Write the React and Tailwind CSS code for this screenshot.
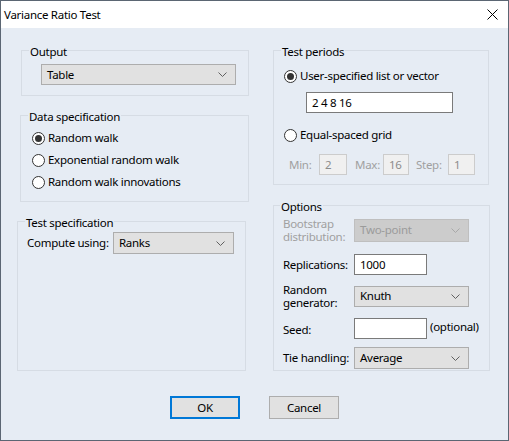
const Chevron = ({ color = "#606060" }) => (
  <svg width="9" height="5" viewBox="0 0 9 5" className="shrink-0">
    <polyline points="0.5,0.5 4.5,4.5 8.5,0.5" fill="none" stroke={color} strokeWidth="1" />
  </svg>
);

const Select = ({ value, w, h = "h-[21px]", disabled }) => (
  <div
    className={`${w} ${h} flex items-center justify-between pl-[5px] pr-[8px] border ${
      disabled ? "bg-[#cccccc] border-[#bfbfbf] text-[#9b9b9b]" : "bg-[#e1e1e1] border-[#adadad]"
    }`}
  >
    <span>{value}</span>
    <Chevron color={disabled ? "#a8a8a8" : "#606060"} />
  </div>
);

const TextBox = ({ value, w, disabled }) => (
  <div
    className={`${w} h-[21px] flex items-center pl-[5px] border ${
      disabled ? "bg-[#f0f0f0] border-[#cccccc] text-[#8c8c8c]" : "bg-white border-[#7a7a7a]"
    }`}
  >
    {value}
  </div>
);

const Radio = ({ checked, label }) => (
  <div className="flex items-center h-full gap-[3px] whitespace-nowrap">
    <span className="w-[13px] h-[13px] rounded-full border border-[#333333] bg-white flex items-center justify-center">
      {checked && <span className="w-[7px] h-[7px] rounded-full bg-[#333333]" />}
    </span>
    <span>{label}</span>
  </div>
);

const Group = ({ title, className, children, titleClass = "ml-[7px]" }) => (
  <div className={`border border-[#d6dce4] ${className}`}>
    <div className={`-mt-[7px] h-4 leading-4 px-px bg-[#e6ecf4] w-fit whitespace-nowrap ${titleClass}`}>{title}</div>
    {children}
  </div>
);

export default function App() {
  return (
    <div className="w-[509px] h-[441px] flex flex-col border border-[#5b6673] text-[11.5px] tracking-[-0.28px] leading-4 text-black font-['Noto_Sans',sans-serif] bg-[#e6ecf4]">
      <div className="h-[27px] bg-white flex items-center justify-between pl-[3px] pr-[10px] shrink-0">
        <span>Variance Ratio Test</span>
        <svg width="11" height="11" viewBox="0 0 11 11">
          <path d="M0.5 0.5 L10.5 10.5 M10.5 0.5 L0.5 10.5" stroke="#000" strokeWidth="1" />
        </svg>
      </div>

      <div className="flex-1 flex flex-col">
        <div className="flex mt-[22px] h-[321px]">
          {/* left column */}
          <div className="w-[232px] ml-[16px] flex flex-col">
            <Group title="Output" className="ml-[4px] w-[228px] h-[46px] pb-[10px]">
              <div className="mt-[4px] ml-[19px]">
                <Select value="Table" w="w-[195px]" />
              </div>
            </Group>

            <Group title="Data specification" className="ml-[3px] w-[229px] mt-[19px] pb-[8px]">
              <div className="mt-[2px] ml-[11px]">
                <div className="h-[22px]"><Radio checked label="Random walk" /></div>
                <div className="h-[22px]"><Radio label="Exponential random walk" /></div>
                <div className="h-[22px]"><Radio label="Random walk innovations" /></div>
              </div>
            </Group>

            <Group title="Test specification" className="w-[229px] mt-[19px] flex-1">
              <div className="mt-px ml-[9px] flex items-center h-[22px] whitespace-nowrap">
                <span className="w-[86px]">Compute using:</span>
                <Select value="Ranks" w="w-[121px]" h="h-[22px]" />
              </div>
            </Group>
          </div>

          {/* right column */}
          <div className="w-[217px] ml-[24px] flex flex-col">
            <Group title="Test periods" className="w-[216px] pb-[9px]">
              <div className="mt-[7px] ml-[10px] h-[18px]"><Radio checked label="User-specified list or vector" /></div>
              <div className="mt-[7px] ml-[32px]"><TextBox value="2 4 8 16" w="w-[147px]" /></div>
              <div className="mt-[13px] ml-[10px] h-[18px]"><Radio label="Equal-spaced grid" /></div>
              <div className="mt-[10px] ml-[15px] flex items-center text-[#a0a0a0] whitespace-nowrap">
                <span className="w-[30px]">Min:</span>
                <TextBox value="2" w="w-[28px]" disabled />
                <span className="ml-[8px] w-[28px]">Max:</span>
                <TextBox value="16" w="w-[26px]" disabled />
                <span className="ml-[7px] w-[32px]">Step:</span>
                <TextBox value="1" w="w-[27px]" disabled />
              </div>
            </Group>

            <Group title="Options" className="w-[217px] mt-[20px] flex-1" titleClass="ml-[6px]">
              <div className="ml-[9px] grid grid-cols-[68px_auto] gap-x-[3px] items-center whitespace-nowrap">
                <div className="mt-[2px] leading-[13px] text-[#a0a0a0]">Bootstrap<br />distribution:</div>
                <div className="mt-[2px]"><Select value="Two-point" w="w-[115px]" h="h-[23px]" disabled /></div>

                <div className="mt-[11px]">Replications:</div>
                <div className="mt-[11px]"><TextBox value="1000" w="w-[73px]" /></div>

                <div className="mt-[8px] leading-[13px]">Random<br />generator:</div>
                <div className="mt-[8px]"><Select value="Knuth" w="w-[115px]" /></div>

                <div className="mt-[12px]">Seed:</div>
                <div className="mt-[9px] flex items-center">
                  <TextBox value="" w="w-[73px]" />
                  <span className="ml-[3px] -mt-[3px]">(optional)</span>
                </div>

                <div className="mt-[8px]">Tie handling:</div>
                <div className="mt-[8px]"><Select value="Average" w="w-[115px]" h="h-[22px]" /></div>
              </div>
            </Group>
          </div>
        </div>

        <div className="flex justify-center gap-[29px] mt-[25px]">
          <button className="w-[70px] h-[23px] bg-[#e1e1e1] border-2 border-[#0078d7]">OK</button>
          <button className="w-[70px] h-[23px] bg-[#e1e1e1] border border-[#adadad]">Cancel</button>
        </div>
      </div>
    </div>
  );
}
